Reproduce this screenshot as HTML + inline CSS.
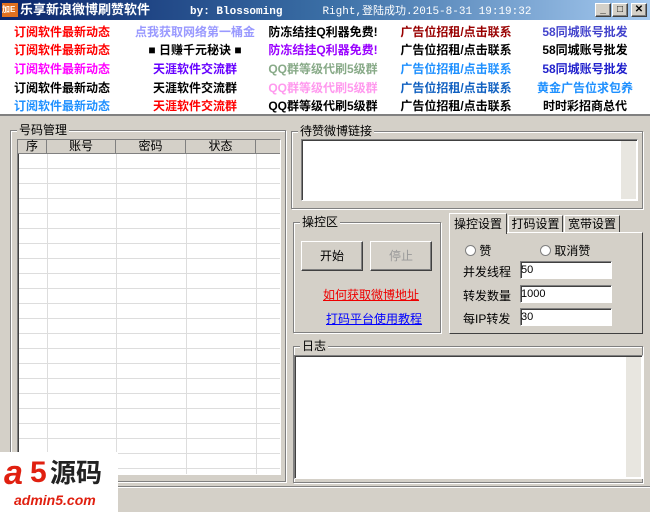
<!DOCTYPE html><html><head><meta charset="utf-8"><style>
*{box-sizing:border-box;margin:0;padding:0}
body{width:650px;height:512px;overflow:hidden;background:#d4d0c8;font-family:"Liberation Sans","Noto Sans CJK SC",sans-serif;font-size:12px;position:relative}
.abs{position:absolute}
.title{left:0;top:0;width:650px;height:20px;background:linear-gradient(90deg,#0a246a,#3a6ea5 50%,#a6caf0);color:#fff;font-weight:bold;font-size:13px;line-height:20px}
.ads{left:0;top:20px;width:650px;height:96px;background:#fff;border-bottom:2px solid #808080}
.ad{position:absolute;font-weight:bold;font-size:12px;white-space:nowrap;transform:translateX(-50%)}
.grp{position:absolute;border:1px solid #808080;box-shadow:1px 1px 0 #fff inset,1px 1px 0 #fff}
.grp>span{position:absolute;top:-8px;left:6px;background:#d4d0c8;padding:0 2px;line-height:14px}
.sunk{position:absolute;background:#fff;border:1px solid #808080;border-right-color:#fff;border-bottom-color:#fff;box-shadow:inset 1px 1px 0 #404040}
.btn{position:absolute;background:#d4d0c8;border:1px solid #fff;border-right-color:#404040;border-bottom-color:#404040;box-shadow:inset -1px -1px 0 #808080;text-align:center;line-height:28px}
.sb{position:absolute;background:#e8e6e0;right:1px;width:15px}
</style></head><body>
<div class="abs title"><span style="display:inline-block;width:16px;height:14px;background:#e07020;margin:3px 2px 0 2px;vertical-align:top;font-size:8px;line-height:14px">加E</span>乐享新浪微博刷赞软件<span style="margin-left:40px;font-family:'Liberation Mono',monospace;font-size:11px">by: Blossoming</span><span style="margin-left:40px;font-family:'Liberation Mono','Noto Sans CJK SC',monospace;font-size:11px;font-weight:normal">Right,登陆成功.2015-8-31  19:19:32</span>
<div class="abs" style="right:3px;top:3px;display:flex;gap:1px"><div class="btn" style="position:static;width:16px;height:14px;line-height:12px;color:#000;font-size:10px">_</div><div class="btn" style="position:static;width:16px;height:14px;line-height:12px;color:#000;font-size:10px">□</div><div class="btn" style="position:static;width:16px;height:14px;line-height:12px;color:#000;font-size:10px;margin-left:2px">✕</div></div></div>
<div class="abs ads">
<div class="ad" style="left:62px;top:3px;color:#f00">订阅软件最新动态</div>
<div class="ad" style="left:62px;top:21px;color:#f00">订阅软件最新动态</div>
<div class="ad" style="left:62px;top:40px;color:#f0f">订阅软件最新动态</div>
<div class="ad" style="left:62px;top:59px;color:#000">订阅软件最新动态</div>
<div class="ad" style="left:62px;top:77px;color:#1e90ff">订阅软件最新动态</div>
<div class="ad" style="left:195px;top:3px;color:#99f">点我获取网络第一桶金</div>
<div class="ad" style="left:195px;top:21px;color:#000">■ 日赚千元秘诀 ■</div>
<div class="ad" style="left:195px;top:40px;color:#60f">天涯软件交流群</div>
<div class="ad" style="left:195px;top:59px;color:#000">天涯软件交流群</div>
<div class="ad" style="left:195px;top:77px;color:#f00">天涯软件交流群</div>
<div class="ad" style="left:323px;top:3px;color:#000">防冻结挂Q利器免费!</div>
<div class="ad" style="left:323px;top:21px;color:#90f">防冻结挂Q利器免费!</div>
<div class="ad" style="left:323px;top:40px;color:#8a8">QQ群等级代刷5级群</div>
<div class="ad" style="left:323px;top:59px;color:#f9e">QQ群等级代刷5级群</div>
<div class="ad" style="left:323px;top:77px;color:#000">QQ群等级代刷5级群</div>
<div class="ad" style="left:456px;top:3px;color:#900">广告位招租/点击联系</div>
<div class="ad" style="left:456px;top:21px;color:#000">广告位招租/点击联系</div>
<div class="ad" style="left:456px;top:40px;color:#1e90ff">广告位招租/点击联系</div>
<div class="ad" style="left:456px;top:59px;color:#1060c0">广告位招租/点击联系</div>
<div class="ad" style="left:456px;top:77px;color:#000">广告位招租/点击联系</div>
<div class="ad" style="left:585px;top:3px;color:#44c">58同城账号批发</div>
<div class="ad" style="left:585px;top:21px;color:#000">58同城账号批发</div>
<div class="ad" style="left:585px;top:40px;color:#22c">58同城账号批发</div>
<div class="ad" style="left:585px;top:59px;color:#1e90ff">黄金广告位求包养</div>
<div class="ad" style="left:585px;top:77px;color:#000">时时彩招商总代</div>
</div>
<div class="grp" style="left:10px;top:130px;width:276px;height:352px"><span>号码管理</span></div>
<div class="sunk" style="left:17px;top:139px;width:264px;height:336px;background:#fff url() ;
background-image:repeating-linear-gradient(180deg,transparent 0 14px,#ddd 14px 15px);background-position:0 14px">
<div class="abs" style="left:0;top:0;width:262px;height:14px;background:#d4d0c8;border-bottom:1px solid #808080;display:flex;line-height:13px">
<div style="width:29px;text-align:center;border-right:1px solid #808080">序</div><div style="width:69px;text-align:center;border-right:1px solid #808080">账号</div><div style="width:70px;text-align:center;border-right:1px solid #808080">密码</div><div style="width:70px;text-align:center;border-right:1px solid #808080">状态</div></div>
<div class="abs" style="left:29px;top:14px;width:1px;height:320px;background:#ddd"></div>
<div class="abs" style="left:98px;top:14px;width:1px;height:320px;background:#ddd"></div>
<div class="abs" style="left:168px;top:14px;width:1px;height:320px;background:#ddd"></div>
<div class="abs" style="left:238px;top:14px;width:1px;height:320px;background:#ddd"></div>
</div>
<div class="grp" style="left:291px;top:131px;width:352px;height:78px"><span>待赞微博链接</span></div>
<div class="sunk" style="left:301px;top:139px;width:337px;height:62px"><div class="sb" style="top:1px;bottom:1px"></div></div>
<div class="grp" style="left:293px;top:222px;width:148px;height:111px"><span>操控区</span></div>
<div class="btn" style="left:301px;top:241px;width:62px;height:30px">开始</div>
<div class="btn" style="left:370px;top:241px;width:62px;height:30px;color:#999">停止</div>
<div class="abs" style="left:323px;top:286px;color:#e00;text-decoration:underline">如何获取微博地址</div>
<div class="abs" style="left:326px;top:310px;color:#00f;text-decoration:underline">打码平台使用教程</div>
<div class="abs" style="left:449px;top:232px;width:194px;height:102px;border:1px solid #fff;border-right-color:#404040;border-bottom-color:#404040"></div>
<div class="abs" style="left:449px;top:213px;width:58px;height:21px;border:1px solid #fff;border-bottom:none;border-right-color:#404040;background:#d4d0c8;text-align:center;line-height:20px">操控设置</div>
<div class="abs" style="left:508px;top:215px;width:55px;height:17px;border:1px solid #fff;border-bottom:none;border-right-color:#404040;text-align:center;line-height:17px">打码设置</div>
<div class="abs" style="left:564px;top:215px;width:56px;height:17px;border:1px solid #fff;border-bottom:none;border-right-color:#404040;text-align:center;line-height:17px">宽带设置</div>
<div class="abs" style="left:465px;top:242px"><span style="display:inline-block;width:11px;height:11px;border-radius:50%;background:#fff;border:1px solid #808080;vertical-align:-1px"></span> 赞</div>
<div class="abs" style="left:540px;top:242px"><span style="display:inline-block;width:11px;height:11px;border-radius:50%;background:#fff;border:1px solid #808080;vertical-align:-1px"></span> 取消赞</div>
<div class="abs" style="left:463px;top:263px">并发线程</div>
<div class="abs" style="left:463px;top:287px">转发数量</div>
<div class="abs" style="left:463px;top:310px">每IP转发</div>
<div class="sunk" style="left:520px;top:261px;width:92px;height:18px;line-height:16px;font-size:11px">50</div>
<div class="sunk" style="left:520px;top:285px;width:92px;height:18px;line-height:16px;font-size:11px">1000</div>
<div class="sunk" style="left:520px;top:308px;width:92px;height:18px;line-height:16px;font-size:11px">30</div>
<div class="grp" style="left:293px;top:346px;width:350px;height:137px"><span>日志</span></div>
<div class="sunk" style="left:294px;top:355px;width:349px;height:124px"><div class="sb" style="top:1px;bottom:1px"></div></div>
<div class="abs" style="left:0;top:486px;width:650px;height:2px;border-top:1px solid #808080;border-bottom:1px solid #fff"></div>
<div class="abs" style="left:0;top:452px;width:118px;height:60px;background:#fff">
<div class="abs" style="left:4px;top:4px;font-size:34px;font-weight:bold;font-style:italic;color:#e02010;line-height:34px">a</div>
<div class="abs" style="left:30px;top:4px;font-size:30px;font-weight:bold;color:#e02010;line-height:34px">5</div>
<div class="abs" style="left:50px;top:6px;font-size:26px;font-weight:bold;color:#222;line-height:30px">源码</div>
<div class="abs" style="left:14px;top:40px;font-size:14px;font-weight:bold;font-style:italic;color:#e02010">admin5.com</div>
</div>
</body></html>
